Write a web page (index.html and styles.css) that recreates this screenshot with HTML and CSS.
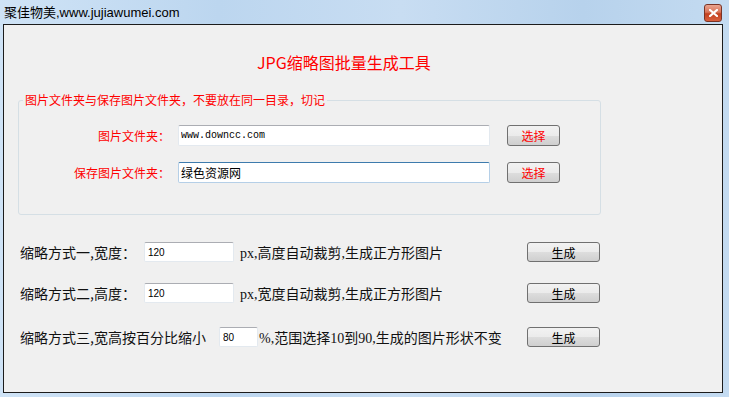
FILE: index.html
```html
<!DOCTYPE html>
<html lang="zh-CN">
<head>
    <meta charset="UTF-8">
    <title>JPG缩略图批量生成工具</title>
    <link rel="stylesheet" href="styles.css">
</head>
<body>
    <div class="window">
        <div class="titlebar">
            <span class="title-text">聚佳物美,www.jujiawumei.com</span>
            <div class="close-btn">
                <svg width="9" height="8" viewBox="0 0 9 8">
                    <path d="M1 1 L8 7 M8 1 L1 7" stroke="#fff" stroke-width="2.2" stroke-linecap="square"/>
                </svg>
            </div>
        </div>
        <div class="client">
            <h1 class="heading">JPG缩略图批量生成工具</h1>

            <fieldset class="folder-box">
                <legend>图片文件夹与保存图片文件夹，不要放在同一目录，切记</legend>
                <div class="folder-row">
                    <label class="folder-label">图片文件夹：</label>
                    <input type="text" class="text-input mono" value="www.downcc.com">
                    <button class="btn btn-pick">选择</button>
                </div>
                <div class="folder-row">
                    <label class="folder-label">保存图片文件夹：</label>
                    <input type="text" class="text-input focused" value="绿色资源网">
                    <button class="btn btn-pick">选择</button>
                </div>
            </fieldset>

            <div class="options">
                <div class="opt-row">
                    <span class="opt-label w1">缩略方式一,宽度：</span>
                    <input type="text" class="text-input num w-size" value="120">
                    <span class="opt-suffix">px,高度自动裁剪,生成正方形图片</span>
                    <button class="btn btn-make">生成</button>
                </div>
                <div class="opt-row row2">
                    <span class="opt-label w1">缩略方式二,高度：</span>
                    <input type="text" class="text-input num w-size" value="120">
                    <span class="opt-suffix">px,宽度自动裁剪,生成正方形图片</span>
                    <button class="btn btn-make">生成</button>
                </div>
                <div class="opt-row row3">
                    <span class="opt-label w3">缩略方式三,宽高按百分比缩小</span>
                    <input type="text" class="text-input num w-pct" value="80">
                    <span class="opt-suffix tight">%,范围选择10到90,生成的图片形状不变</span>
                    <button class="btn btn-make">生成</button>
                </div>
            </div>
        </div>
    </div>
</body>
</html>
```

FILE: styles.css
```css
body {
    margin: 0;
    padding: 0;
    font-family: "Noto Sans CJK SC", sans-serif;
}

/* window frame */
.window {
    width: 729px;
    height: 397px;
    box-sizing: border-box;
    padding: 0 6px 4px 3px;
    display: flex;
    flex-direction: column;
    background: linear-gradient(90deg, #cfe3f6 0%, #bcd6ef 30%, #c8ddf2 55%, #b7d2ec 80%, #c4dbf1 100%);
}
.titlebar {
    height: 24px;
    display: flex;
    align-items: flex-start;
    justify-content: space-between;
    padding-left: 1px;
}
.title-text {
    font-family: "Liberation Sans", "Noto Sans CJK SC", sans-serif;
    font-size: 13px;
    line-height: 15px;
    margin-top: 5px;
    color: #000;
}
.close-btn {
    width: 16px;
    height: 16px;
    margin-top: 4px;
    margin-right: 1px;
    border: 1px solid #7a3426;
    border-radius: 3px;
    background: linear-gradient(#eaa48f 0%, #d8745a 45%, #c2401f 55%, #d9603e 100%);
    display: flex;
    align-items: center;
    justify-content: center;
}
.client {
    flex: 1;
    border: 1px solid #1c1c1c;
    background-color: #f0f0f0;
}

/* heading */
.heading {
    margin: 27px 0 0 253px;
    font-size: 16px;
    line-height: 20px;
    font-weight: normal;
    color: #ff0000;
}

/* folder group */
.folder-box {
    width: 583px;
    box-sizing: border-box;
    margin: 21px 0 0 14px;
    padding: 18px 0 31px 0;
    border: 1px solid #d5dfe5;
    border-radius: 3px;
}
.folder-box legend {
    margin-left: 4px;
    padding: 0 2px;
    font-size: 12px;
    line-height: 14px;
    color: #ff0000;
}
.folder-row {
    display: flex;
    align-items: center;
    height: 21px;
}
.folder-row + .folder-row {
    margin-top: 16px;
}
.folder-label {
    flex: 0 0 151px;
    text-align: right;
    font-size: 12px;
    color: #ff0000;
}
.folder-row .text-input {
    width: 312px;
    height: 21px;
    margin-left: 8px;
}

/* inputs */
.text-input {
    box-sizing: border-box;
    padding: 0 2px;
    border: 1px solid #e3e9ef;
    border-top-color: #abadb3;
    border-radius: 2px;
    background: #fff;
    font-family: "Noto Sans CJK SC", sans-serif;
    font-size: 12px;
    color: #000;
    outline: none;
}
.text-input.mono {
    font-family: "Liberation Mono", monospace;
    font-size: 10px;
}
.text-input.focused {
    border-color: #b5cfe7;
    border-top-color: #3d7bad;
}
.text-input.num {
    font-family: "Liberation Sans", sans-serif;
    font-size: 10px;
    height: 20px;
    padding-left: 3px;
}
.w-size {
    width: 90px;
}
.w-pct {
    width: 39px;
}

/* buttons */
.btn {
    box-sizing: border-box;
    height: 21px;
    padding: 0;
    border: 1px solid #707070;
    border-radius: 3px;
    background: linear-gradient(#f2f2f2 0%, #ebebeb 50%, #dddddd 51%, #cfcfcf 100%);
    font-family: "Noto Sans CJK SC", sans-serif;
    font-size: 12px;
    line-height: 17px;
}
.btn-pick {
    width: 53px;
    margin-left: 17px;
    color: #ff0000;
}
.btn-make {
    width: 73px;
    height: 20px;
    margin-left: auto;
    color: #000;
}

/* option rows */
.options {
    padding: 27px 0 0 16px;
}
.opt-row {
    display: flex;
    align-items: center;
    width: 580px;
    height: 20px;
    font-size: 14px;
    color: #111;
}
.row2 {
    margin-top: 21px;
}
.row3 {
    margin-top: 24px;
}
.opt-label.w1 {
    flex: 0 0 124px;
}
.opt-label.w3 {
    flex: 0 0 199px;
}
.opt-suffix {
    margin-left: 6px;
    font-family: "Liberation Serif", "Noto Sans CJK SC", serif;
}
.opt-suffix.tight {
    margin-left: 1px;
}
```
